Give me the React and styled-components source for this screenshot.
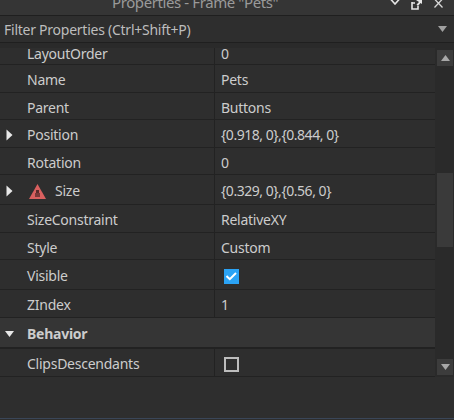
import styled, { createGlobalStyle } from "styled-components";

const Global = createGlobalStyle`
  html, body {
    margin: 0;
    background: #2e2e2e;
  }
`;

const Page = styled.div`
  width: 454px;
  height: 420px;
  display: flex;
  flex-direction: column;
  overflow: hidden;
  background: #2e2e2e;
  color: #cccccc;
  font-family: "Noto Sans", "Open Sans", sans-serif;
  font-size: 14px;
  letter-spacing: -0.25px;
`;
const TitleBar = styled.div`
  height: 15px;
  flex: none;
  display: flex;
  align-items: flex-start;
  overflow: hidden;
  border-bottom: 1px solid #1f1f1f;
  background: #353535;
`;
const Title = styled.div`
  margin: -5px 0 0 112px;
  width: 278px;
  flex: none;
  line-height: 15px;
  font-size: 15px;
  color: #9a9a9a;
  white-space: nowrap;
  letter-spacing: -0.4px;
`;
const WindowIcon = styled.svg`
  flex: none;
  margin-left: ${(p) => p.$left}px;
`;
const Filter = styled.div`
  height: 26px;
  flex: none;
  display: flex;
  align-items: center;
  justify-content: space-between;
  padding: 0 7px 0 4px;
  border-bottom: 1px solid #1f1f1f;
  color: #bdbdbd;
`;
const Body = styled.div`
  flex: none;
  display: flex;
  padding-top: 5px;
  background: #2a2a2a;
`;
const List = styled.div`
  width: 435px;
  flex: none;
  background: #2e2e2e;
`;
const Row = styled.div`
  height: ${(p) => p.$h}px;
  box-sizing: border-box;
  display: grid;
  grid-template-columns: 215px 1fr;
  grid-template-rows: minmax(0, 1fr);
  border-bottom: 1px solid #222222;
  overflow: hidden;
`;
const NameCell = styled.div`
  display: flex;
  align-items: ${(p) => (p.$clip ? "flex-end" : "center")};
  gap: 9px;
  padding: ${(p) => (p.$clip ? "0 0 1px 27px" : "2px 0 0 27px")};
  position: relative;
  border-right: 1px solid #222222;
`;
const ValueCell = styled.div`
  display: flex;
  align-items: ${(p) => (p.$clip ? "flex-end" : "center")};
  padding: ${(p) => (p.$clip ? "0 0 1px 6px" : "2px 0 0 6px")};
  letter-spacing: ${(p) => (p.$numeric ? "-0.47px" : "-0.25px")};
`;
const Arrow = styled.svg`
  position: absolute;
  left: ${(p) => p.$left}px;
  top: calc(50% + 1px);
  transform: translateY(-50%);
`;
const Section = styled.div`
  height: 31px;
  box-sizing: border-box;
  display: flex;
  align-items: center;
  padding: 2px 0 0 27px;
  position: relative;
  background: #353535;
  border-bottom: 2px solid #222222;
  font-weight: 700;
`;
const Check = styled.div`
  width: 15px;
  height: 15px;
  box-sizing: border-box;
  margin: 2px 0 0 3px;
  display: flex;
  align-items: center;
  justify-content: center;
  background: ${(p) => (p.$on ? "#2ba3f5" : "transparent")};
  border: ${(p) => (p.$on ? "none" : "2px solid #bdbdbd")};
`;
const Scrollbar = styled.div`
  width: 16px;
  margin-left: 2px;
  display: flex;
  flex-direction: column;
  background: #2a2a2a;
`;
const ScrollButton = styled.div`
  height: 16px;
  margin: ${(p) => p.$m};
  flex: none;
  display: flex;
  align-items: center;
  justify-content: center;
  background: #3c3c3c;
`;
const Thumb = styled.div`
  height: 74px;
  flex: none;
  margin-top: 107px;
  margin-bottom: auto;
  background: #3a3a3a;
`;
const Footer = styled.div`
  flex: 1;
  border-bottom: 1px solid #3a4658;
  margin-bottom: 1px;
`;

const Warning = () => (
  <svg width="17" height="15" viewBox="0 0 17 15" style={{ marginLeft: 2, marginTop: 1 }}>
    <path d="M8.5 0 L17 15 L0 15 Z" fill="#d9605f" />
    <rect x="7" y="6" width="3" height="3" fill="#5c2b2b" />
    <rect x="6" y="9" width="5" height="4" fill="#7a3838" />
  </svg>
);

const rows = [
  { name: "LayoutOrder", value: "0", h: 17, clip: true },
  { name: "Name", value: "Pets", h: 28 },
  { name: "Parent", value: "Buttons", h: 27 },
  { name: "Position", value: "{0.918, 0},{0.844, 0}", h: 28, arrow: true, numeric: true },
  { name: "Rotation", value: "0", h: 27 },
  { name: "Size", value: "{0.329, 0},{0.56, 0}", h: 30, arrow: true, warn: true, numeric: true },
  { name: "SizeConstraint", value: "RelativeXY", h: 28 },
  { name: "Style", value: "Custom", h: 27 },
  { name: "Visible", check: "on", h: 30 },
  { name: "ZIndex", value: "1", h: 28 },
];

export default function App() {
  return (
    <Page>
      <Global />
      <TitleBar>
        <Title>Properties - Frame "Pets"</Title>
        <WindowIcon $left={0} width="10" height="5" viewBox="0 0 10 5">
          <path d="M0.5 -1 L5 4 L9.5 -1" fill="none" stroke="#e6e6e6" strokeWidth="1.6" />
        </WindowIcon>
        <WindowIcon $left={11} width="12" height="10" viewBox="0 0 12 10">
          <path d="M1 3 H4 M1 2 V9 H7 V6" fill="none" stroke="#e6e6e6" strokeWidth="1.6" />
          <path d="M5 0 H11 V4 L9.5 3 L7 6 L5.5 4.5 L8 2 Z" fill="#e6e6e6" />
        </WindowIcon>
        <WindowIcon $left={11} width="9" height="8" viewBox="0 0 9 8">
          <path d="M0.5 -1 L8.5 7.5 M8.5 -1 L0.5 7.5" stroke="#d8d8d8" strokeWidth="1.3" />
        </WindowIcon>
      </TitleBar>
      <Filter>
        Filter Properties (Ctrl+Shift+P)
        <svg width="9" height="6" viewBox="0 0 9 6">
          <path d="M0 0 H9 L4.5 6 Z" fill="#a0a0a0" />
        </svg>
      </Filter>
      <Body>
        <List>
          {rows.map((r) => (
            <Row key={r.name} $h={r.h}>
              <NameCell $clip={r.clip}>
                {r.arrow && (
                  <Arrow $left={6} width="7" height="12" viewBox="0 0 7 12">
                    <path d="M0.5 0.5 L6.5 6 L0.5 11.5 Z" fill="#e8e8e8" />
                  </Arrow>
                )}
                {r.warn && <Warning />}
                {r.name}
              </NameCell>
              <ValueCell $clip={r.clip} $numeric={r.numeric}>
                {r.check ? (
                  <Check $on>
                    <svg width="11" height="9" viewBox="0 0 11 9">
                      <path d="M0.5 4 L3.8 7.2 L10 1" fill="none" stroke="#fff" strokeWidth="2" />
                    </svg>
                  </Check>
                ) : (
                  r.value
                )}
              </ValueCell>
            </Row>
          ))}
          <Section>
            <Arrow $left={5} width="9" height="6" viewBox="0 0 9 6">
              <path d="M0 0 H9 L4.5 6 Z" fill="#e8e8e8" />
            </Arrow>
            Behavior
          </Section>
          <Row $h={28}>
            <NameCell>ClipsDescendants</NameCell>
            <ValueCell>
              <Check />
            </ValueCell>
          </Row>
        </List>
        <Scrollbar>
          <ScrollButton $m="2px 0 0">
            <svg width="9" height="6" viewBox="0 0 9 6">
              <path d="M0 6 H9 L4.5 0 Z" fill="#a8a8a8" />
            </svg>
          </ScrollButton>
          <Thumb />
          <ScrollButton $m="0 0 2px">
            <svg width="9" height="6" viewBox="0 0 9 6">
              <path d="M0 0 H9 L4.5 6 Z" fill="#a8a8a8" />
            </svg>
          </ScrollButton>
        </Scrollbar>
      </Body>
      <Footer />
    </Page>
  );
}
